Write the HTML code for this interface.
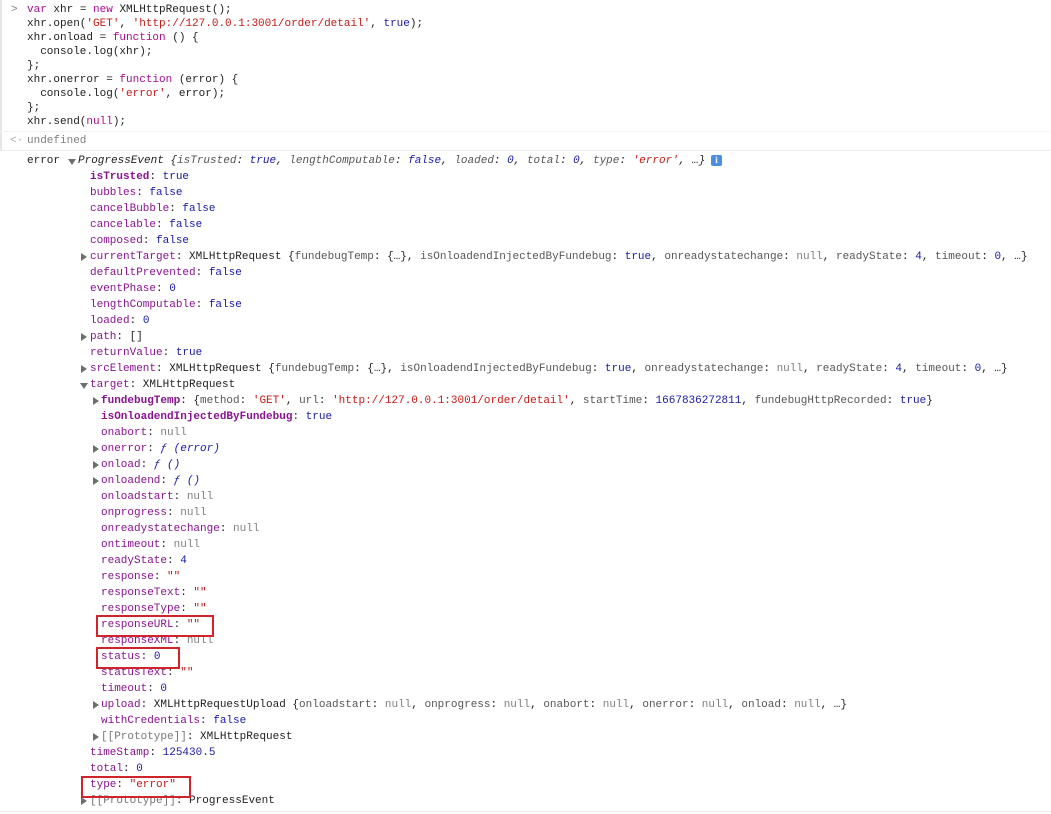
<!DOCTYPE html>
<html><head><meta charset="utf-8"><style>
html,body{margin:0;padding:0;background:#fff;width:1051px;height:814px;overflow:hidden}
body{font-family:"Liberation Mono",monospace;font-size:11px;color:#222;position:relative}
.r{position:absolute;height:16px;line-height:16px;white-space:pre}
.c{position:absolute;height:14px;line-height:14px;white-space:pre}
.k{color:#aa0d91}.s{color:#c41a16}.n{color:#1a1aa6}.p{color:#881391}.g{color:#808080}.pk{color:#565656}
.b{font-weight:bold}.i{font-style:italic}
.a{position:absolute;width:0;height:0;border-top:4px solid transparent;border-bottom:4px solid transparent;border-left:6px solid #6e6e6e}
.d{position:absolute;width:0;height:0;border-left:4px solid transparent;border-right:4px solid transparent;border-top:6px solid #6e6e6e}
.box{position:absolute;border:2px solid #d1232a;box-sizing:border-box}
.hl{position:absolute;left:0;right:0;height:1px;background:#ececec}
</style></head><body>
<div style="position:absolute;left:0;top:0;width:2px;height:150px;background:#e6e6e6"></div>
<div class="c g" style="left:11px;top:3px">&gt;</div>
<div class="c" style="left:27px;top:3px"><span class="k">var</span> xhr = <span class="k">new</span> XMLHttpRequest();</div>
<div class="c" style="left:27px;top:17px">xhr.open(<span class="s">'GET'</span>, <span class="s">'http://127.0.0.1:3001/order/detail'</span>, <span class="n">true</span>);</div>
<div class="c" style="left:27px;top:31px">xhr.onload = <span class="k">function</span> () {</div>
<div class="c" style="left:27px;top:45px">  console.log(xhr);</div>
<div class="c" style="left:27px;top:59px">};</div>
<div class="c" style="left:27px;top:73px">xhr.onerror = <span class="k">function</span> (error) {</div>
<div class="c" style="left:27px;top:87px">  console.log(<span class="s">'error'</span>, error);</div>
<div class="c" style="left:27px;top:101px">};</div>
<div class="c" style="left:27px;top:115px">xhr.send(<span class="k">null</span>);</div>
<div class="hl" style="top:131px;background:#f3f3f3"></div>
<div class="r g" style="left:10px;top:133px;color:#aaa">&lt;·</div>
<div class="r g" style="left:27px;top:133px">undefined</div>
<div class="hl" style="top:150px"></div>

<div class="r" style="left:27px;top:153px">error</div>
<div class="d" style="left:68px;top:159px"></div>
<div class="r i" style="left:78px;top:153px">ProgressEvent {<span class="pk">isTrusted</span>: <span class="n">true</span>, <span class="pk">lengthComputable</span>: <span class="n">false</span>, <span class="pk">loaded</span>: <span class="n">0</span>, <span class="pk">total</span>: <span class="n">0</span>, <span class="pk">type</span>: <span class="s">'error'</span>, …}</div>
<div style="position:absolute;left:711px;top:155px;width:11px;height:11px;background:#4a8ee6;border-radius:2px;color:#fff;font:bold 9px 'Liberation Serif',serif;text-align:center;line-height:11px">i</div>

<div class="r" style="left:90px;top:169px"><span class="p b">isTrusted</span>: <span class="n">true</span></div>
<div class="r" style="left:90px;top:185px"><span class="p">bubbles</span>: <span class="n">false</span></div>
<div class="r" style="left:90px;top:201px"><span class="p">cancelBubble</span>: <span class="n">false</span></div>
<div class="r" style="left:90px;top:217px"><span class="p">cancelable</span>: <span class="n">false</span></div>
<div class="r" style="left:90px;top:233px"><span class="p">composed</span>: <span class="n">false</span></div>
<div class="a" style="left:81px;top:253px"></div>
<div class="r" style="left:90px;top:249px"><span class="p">currentTarget</span>: XMLHttpRequest {<span class="pk">fundebugTemp</span>: {…}, <span class="pk">isOnloadendInjectedByFundebug</span>: <span class="n">true</span>, <span class="pk">onreadystatechange</span>: <span class="g">null</span>, <span class="pk">readyState</span>: <span class="n">4</span>, <span class="pk">timeout</span>: <span class="n">0</span>, …}</div>
<div class="r" style="left:90px;top:265px"><span class="p">defaultPrevented</span>: <span class="n">false</span></div>
<div class="r" style="left:90px;top:281px"><span class="p">eventPhase</span>: <span class="n">0</span></div>
<div class="r" style="left:90px;top:297px"><span class="p">lengthComputable</span>: <span class="n">false</span></div>
<div class="r" style="left:90px;top:313px"><span class="p">loaded</span>: <span class="n">0</span></div>
<div class="a" style="left:81px;top:333px"></div>
<div class="r" style="left:90px;top:329px"><span class="p">path</span>: []</div>
<div class="r" style="left:90px;top:345px"><span class="p">returnValue</span>: <span class="n">true</span></div>
<div class="a" style="left:81px;top:365px"></div>
<div class="r" style="left:90px;top:361px"><span class="p">srcElement</span>: XMLHttpRequest {<span class="pk">fundebugTemp</span>: {…}, <span class="pk">isOnloadendInjectedByFundebug</span>: <span class="n">true</span>, <span class="pk">onreadystatechange</span>: <span class="g">null</span>, <span class="pk">readyState</span>: <span class="n">4</span>, <span class="pk">timeout</span>: <span class="n">0</span>, …}</div>
<div class="d" style="left:80px;top:383px"></div>
<div class="r" style="left:90px;top:377px"><span class="p">target</span>: XMLHttpRequest</div>

<div class="a" style="left:93px;top:397px"></div>
<div class="r" style="left:101px;top:393px"><span class="p b">fundebugTemp</span>: {<span class="pk">method</span>: <span class="s">'GET'</span>, <span class="pk">url</span>: <span class="s">'http://127.0.0.1:3001/order/detail'</span>, <span class="pk">startTime</span>: <span class="n">1667836272811</span>, <span class="pk">fundebugHttpRecorded</span>: <span class="n">true</span>}</div>
<div class="r" style="left:101px;top:409px"><span class="p b">isOnloadendInjectedByFundebug</span>: <span class="n">true</span></div>
<div class="r" style="left:101px;top:425px"><span class="p">onabort</span>: <span class="g">null</span></div>
<div class="a" style="left:93px;top:445px"></div>
<div class="r" style="left:101px;top:441px"><span class="p">onerror</span>: <span class="i n">ƒ (error)</span></div>
<div class="a" style="left:93px;top:461px"></div>
<div class="r" style="left:101px;top:457px"><span class="p">onload</span>: <span class="i n">ƒ ()</span></div>
<div class="a" style="left:93px;top:477px"></div>
<div class="r" style="left:101px;top:473px"><span class="p">onloadend</span>: <span class="i n">ƒ ()</span></div>
<div class="r" style="left:101px;top:489px"><span class="p">onloadstart</span>: <span class="g">null</span></div>
<div class="r" style="left:101px;top:505px"><span class="p">onprogress</span>: <span class="g">null</span></div>
<div class="r" style="left:101px;top:521px"><span class="p">onreadystatechange</span>: <span class="g">null</span></div>
<div class="r" style="left:101px;top:537px"><span class="p">ontimeout</span>: <span class="g">null</span></div>
<div class="r" style="left:101px;top:553px"><span class="p">readyState</span>: <span class="n">4</span></div>
<div class="r" style="left:101px;top:569px"><span class="p">response</span>: <span class="s">""</span></div>
<div class="r" style="left:101px;top:585px"><span class="p">responseText</span>: <span class="s">""</span></div>
<div class="r" style="left:101px;top:601px"><span class="p">responseType</span>: <span class="s">""</span></div>
<div class="r" style="left:101px;top:617px"><span class="p">responseURL</span>: <span class="s">""</span></div>
<div class="r" style="left:101px;top:633px"><span class="p">responseXML</span>: <span class="g">null</span></div>
<div class="r" style="left:101px;top:649px"><span class="p">status</span>: <span class="n">0</span></div>
<div class="r" style="left:101px;top:665px"><span class="p">statusText</span>: <span class="s">""</span></div>
<div class="r" style="left:101px;top:681px"><span class="p">timeout</span>: <span class="n">0</span></div>
<div class="a" style="left:93px;top:701px"></div>
<div class="r" style="left:101px;top:697px"><span class="p">upload</span>: XMLHttpRequestUpload {<span class="pk">onloadstart</span>: <span class="g">null</span>, <span class="pk">onprogress</span>: <span class="g">null</span>, <span class="pk">onabort</span>: <span class="g">null</span>, <span class="pk">onerror</span>: <span class="g">null</span>, <span class="pk">onload</span>: <span class="g">null</span>, …}</div>
<div class="r" style="left:101px;top:713px"><span class="p">withCredentials</span>: <span class="n">false</span></div>
<div class="a" style="left:93px;top:733px"></div>
<div class="r" style="left:101px;top:729px"><span class="p" style="color:#777">[[Prototype]]</span>: XMLHttpRequest</div>

<div class="r" style="left:90px;top:745px"><span class="p">timeStamp</span>: <span class="n">125430.5</span></div>
<div class="r" style="left:90px;top:761px"><span class="p">total</span>: <span class="n">0</span></div>
<div class="r" style="left:90px;top:777px"><span class="p">type</span>: <span class="s">"error"</span></div>
<div class="a" style="left:81px;top:797px"></div>
<div class="r" style="left:90px;top:793px"><span class="p" style="color:#777">[[Prototype]]</span>: ProgressEvent</div>
<div class="hl" style="top:811px"></div>

<div class="box" style="left:96px;top:615px;width:118px;height:22px"></div>
<div class="box" style="left:96px;top:647px;width:84px;height:22px"></div>
<div class="box" style="left:81px;top:776px;width:110px;height:22px"></div>
</body></html>
